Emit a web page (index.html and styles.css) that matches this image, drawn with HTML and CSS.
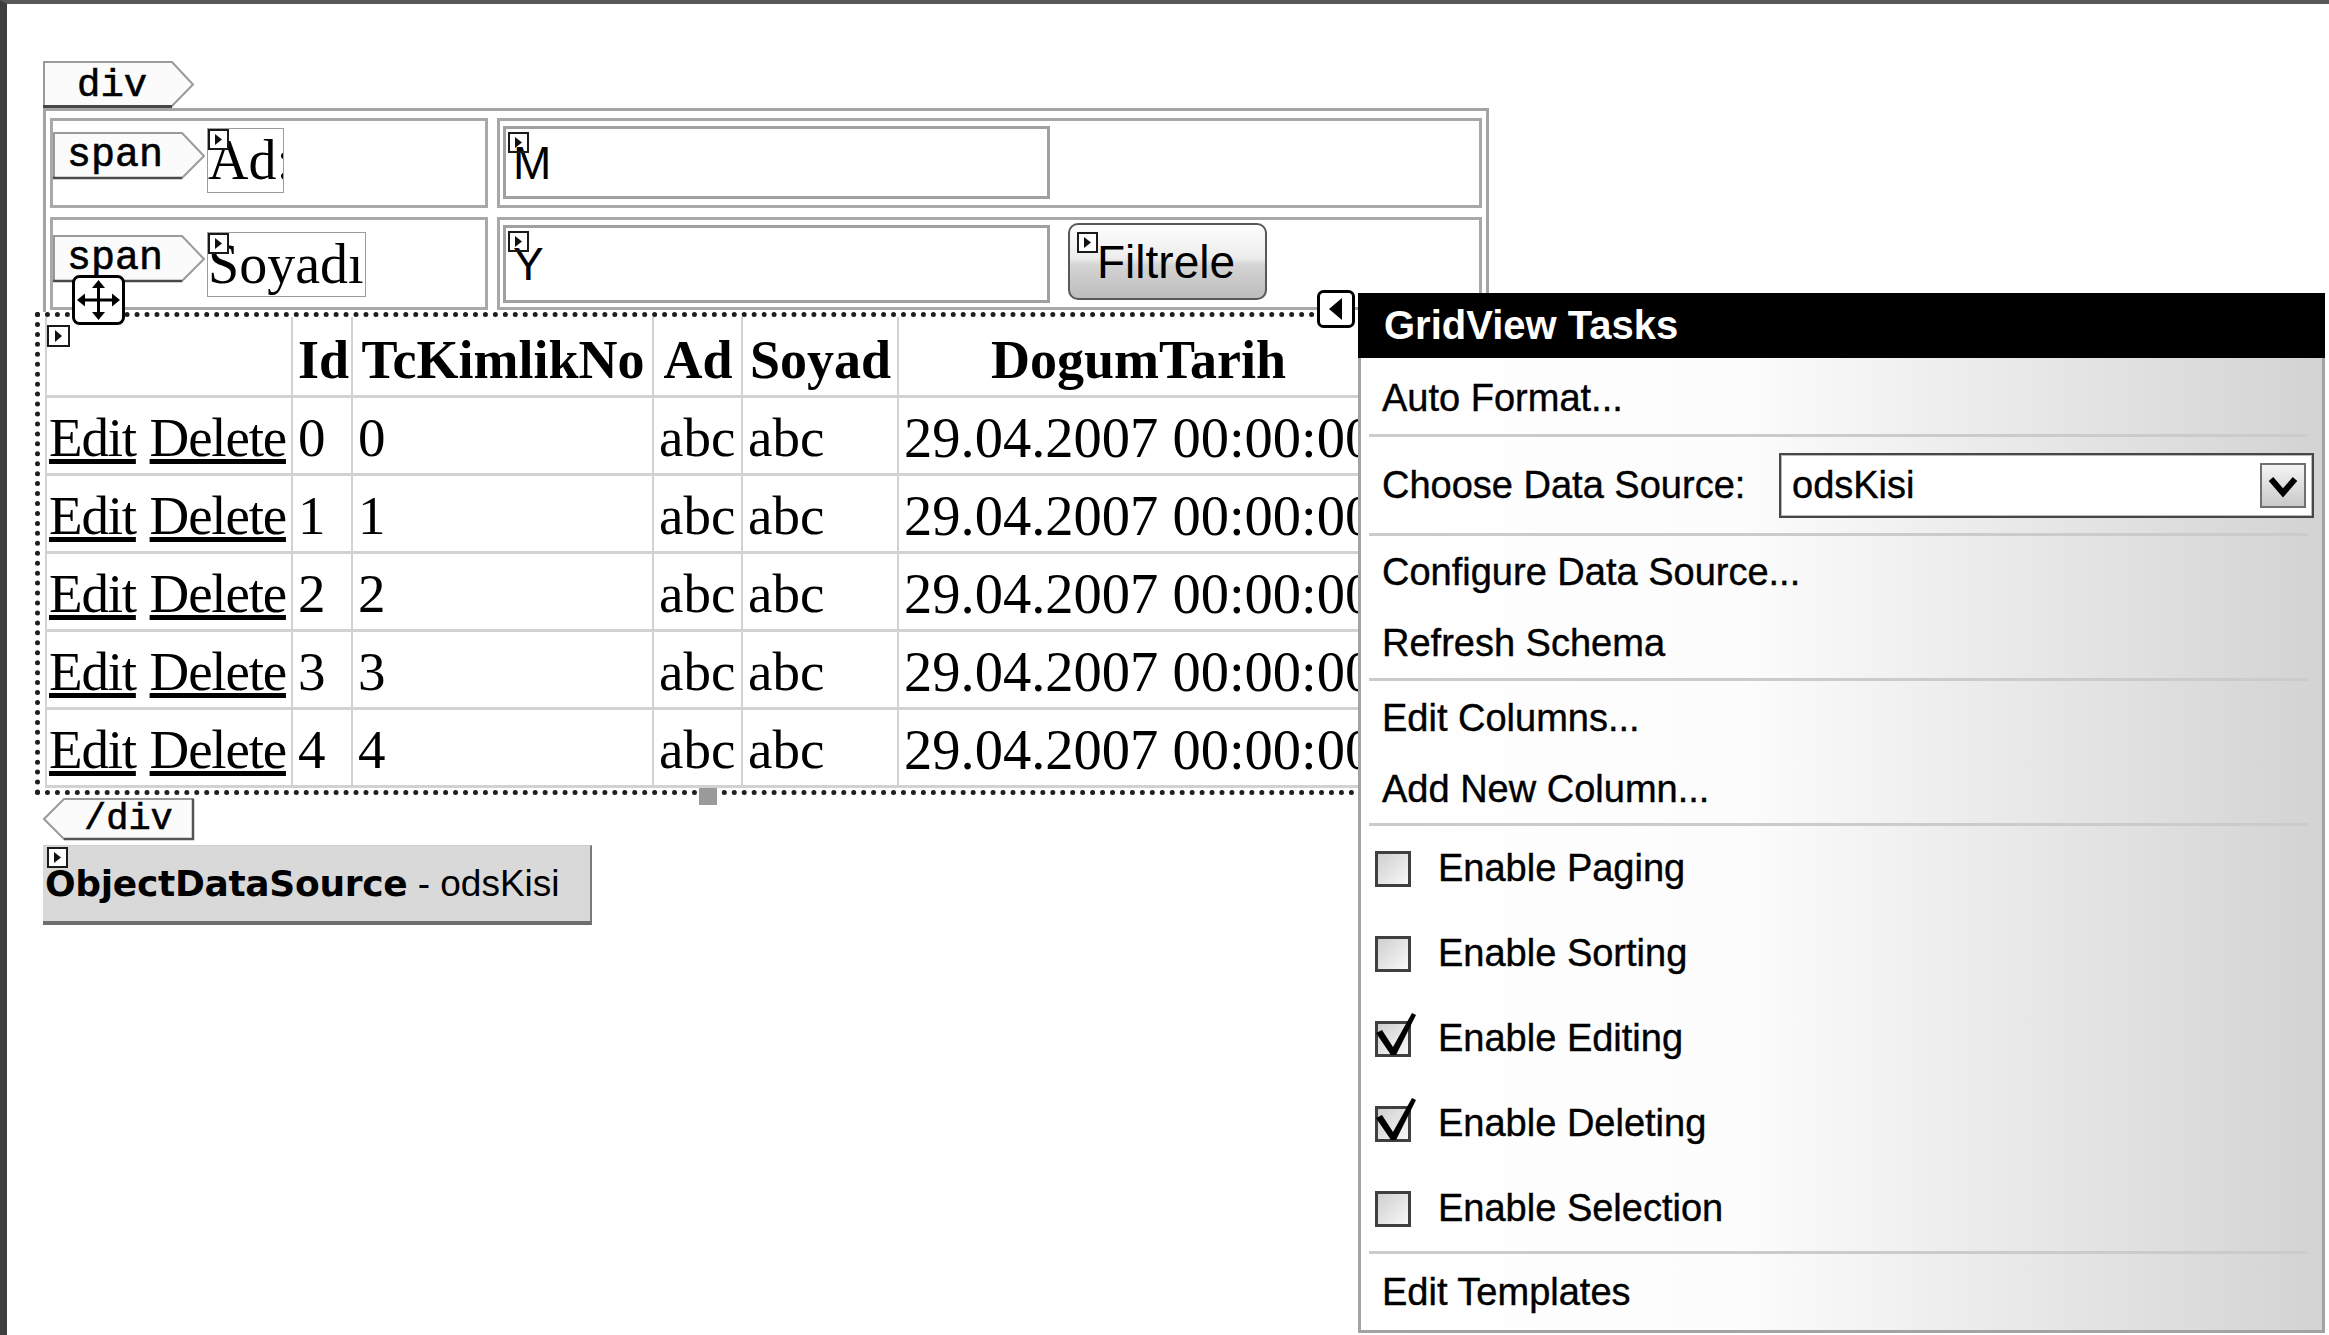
FILE: index.html
```html
<!DOCTYPE html>
<html>
<head>
<meta charset="utf-8">
<title>GridView Tasks</title>
<link rel="stylesheet" href="styles.css">
</head>
<body>
<div class="frame">

  <div class="tag tag-open">
    <svg class="tag-shape" width="152" height="47" viewBox="0 0 152 47"><polygon points="1,1 129,1 150,23.5 129,45 1,45" fill="#fbfbfb" stroke="#9a9a9a" stroke-width="2"/><line x1="0" y1="45.5" x2="129" y2="45.5" stroke="#474747" stroke-width="3"/></svg>
    <span class="tag-text tag-text-open">div</span>
  </div>

  <div class="divbox">
    <div class="cell r1">
      <div class="tag tag-span">
        <svg class="tag-shape" width="153" height="48" viewBox="0 0 153 48"><polygon points="1,1 129,1 151,24 129,46 1,46" fill="#fbfbfb" stroke="#9a9a9a" stroke-width="2"/><line x1="0" y1="46" x2="129" y2="46" stroke="#4a4a4a" stroke-width="2.5"/></svg>
        <span class="tag-text tag-text-span">span</span>
      </div>
      <div class="label label-ad">
        <svg class="glyph" width="21" height="21" viewBox="0 0 21 21"><rect x="1" y="1" width="19" height="19" fill="#fff" stroke="#1a1a1a" stroke-width="2"/><polygon points="7,5 14,10.5 7,16" fill="#111"/></svg>Ad:
      </div>
    </div>
    <div class="cell r1">
      <div class="input input-1">
        <svg class="glyph" width="21" height="21" viewBox="0 0 21 21"><rect x="1" y="1" width="19" height="19" fill="#fff" fill-opacity="0" stroke="#1a1a1a" stroke-width="2"/><polygon points="7,5 14,10.5 7,16" fill="#111"/></svg>M
      </div>
    </div>
    <div class="cell r2">
      <div class="tag tag-span">
        <svg class="tag-shape" width="153" height="48" viewBox="0 0 153 48"><polygon points="1,1 129,1 151,24 129,46 1,46" fill="#fbfbfb" stroke="#9a9a9a" stroke-width="2"/><line x1="0" y1="46" x2="129" y2="46" stroke="#4a4a4a" stroke-width="2.5"/></svg>
        <span class="tag-text tag-text-span">span</span>
      </div>
      <div class="label label-soy">
        <svg class="glyph" width="21" height="21" viewBox="0 0 21 21"><rect x="1" y="1" width="19" height="19" fill="#fff" stroke="#1a1a1a" stroke-width="2"/><polygon points="7,5 14,10.5 7,16" fill="#111"/></svg>Soyadı:
      </div>
    </div>
    <div class="cell r2">
      <div class="input input-2">
        <svg class="glyph" width="21" height="21" viewBox="0 0 21 21"><rect x="1" y="1" width="19" height="19" fill="#fff" fill-opacity="0" stroke="#1a1a1a" stroke-width="2"/><polygon points="7,5 14,10.5 7,16" fill="#111"/></svg>Y
      </div>
      <div class="btn">
        <svg class="glyph glyph-btn" width="21" height="21" viewBox="0 0 21 21"><rect x="1" y="1" width="19" height="19" fill="#fff" stroke="#1a1a1a" stroke-width="2"/><polygon points="7,5 14,10.5 7,16" fill="#111"/></svg>Filtrele
      </div>
    </div>
  </div>

  <div class="gridview">
    <svg class="move-handle" width="53" height="50" viewBox="0 0 53 50">
      <rect x="1.5" y="1.5" width="50" height="47" rx="6" fill="#fff" stroke="#000" stroke-width="3"/>
      <line x1="26.5" y1="10" x2="26.5" y2="40" stroke="#000" stroke-width="3"/>
      <line x1="10" y1="25" x2="43" y2="25" stroke="#000" stroke-width="3"/>
      <polygon points="26.5,5 20,13 33,13" fill="#000"/>
      <polygon points="26.5,45 20,37 33,37" fill="#000"/>
      <polygon points="5,25 13,18.5 13,31.5" fill="#000"/>
      <polygon points="48,25 40,18.5 40,31.5" fill="#000"/>
    </svg>
    <svg class="grid-glyph" width="23" height="22" viewBox="0 0 23 22"><rect x="1" y="1" width="21" height="20" fill="#fff" stroke="#1a1a1a" stroke-width="2"/><polygon points="8,5 15,11 8,17" fill="#111"/></svg>
    <svg class="smart-tag" width="38" height="38" viewBox="0 0 38 38"><rect x="1.5" y="1.5" width="35" height="35" rx="5" fill="#fff" stroke="#000" stroke-width="3"/><polygon points="25,8 12,19 25,30" fill="#000"/></svg>
    <div class="resize-handle"></div>

    <table class="grid">
      <colgroup>
        <col class="c-cmd"><col class="c-id"><col class="c-tc"><col class="c-ad"><col class="c-soy"><col class="c-dt">
      </colgroup>
      <thead>
        <tr><th class="first"></th><th>Id</th><th>TcKimlikNo</th><th>Ad</th><th>Soyad</th><th>DogumTarih</th></tr>
      </thead>
      <tbody>
        <tr><td class="first"><a class="lnk" href="#">Edit</a> <a class="lnk" href="#">Delete</a></td><td>0</td><td>0</td><td>abc</td><td>abc</td><td class="date">29.04.2007 00:00:00</td></tr>
        <tr><td class="first"><a class="lnk" href="#">Edit</a> <a class="lnk" href="#">Delete</a></td><td>1</td><td>1</td><td>abc</td><td>abc</td><td class="date">29.04.2007 00:00:00</td></tr>
        <tr><td class="first"><a class="lnk" href="#">Edit</a> <a class="lnk" href="#">Delete</a></td><td>2</td><td>2</td><td>abc</td><td>abc</td><td class="date">29.04.2007 00:00:00</td></tr>
        <tr><td class="first"><a class="lnk" href="#">Edit</a> <a class="lnk" href="#">Delete</a></td><td>3</td><td>3</td><td>abc</td><td>abc</td><td class="date">29.04.2007 00:00:00</td></tr>
        <tr><td class="first"><a class="lnk" href="#">Edit</a> <a class="lnk" href="#">Delete</a></td><td>4</td><td>4</td><td>abc</td><td>abc</td><td class="date">29.04.2007 00:00:00</td></tr>
      </tbody>
    </table>
  </div>

  <div class="tag tag-close">
    <svg class="tag-shape" width="152" height="43" viewBox="0 0 152 43"><polygon points="21,1 150,1 150,41 21,41 1,21" fill="#fbfbfb" stroke="#9a9a9a" stroke-width="2"/><polyline points="150,1 150,41 21,41" fill="none" stroke="#555" stroke-width="2.5"/></svg>
    <span class="tag-text tag-text-close">/div</span>
  </div>

  <div class="ods">
    <svg class="glyph glyph-ods" width="21" height="21" viewBox="0 0 21 21"><rect x="1" y="1" width="19" height="19" fill="#fff" stroke="#1a1a1a" stroke-width="2"/><polygon points="7,5 14,10.5 7,16" fill="#111"/></svg>
    <span class="ods-type">ObjectDataSource</span><span class="ods-name">&nbsp;- odsKisi</span>
  </div>

  <div class="panel">
    <div class="panel-title">GridView Tasks</div>
    <div class="item it-auto">Auto Format...</div>
    <div class="sep"></div>
    <div class="item it-choose">
      <span>Choose Data Source:</span>
      <div class="select">
        <span class="select-text">odsKisi</span>
        <span class="select-btn"><svg width="42" height="41" viewBox="0 0 42 41"><polyline points="9,14 21,28 33,14" fill="none" stroke="#000" stroke-width="6"/></svg></span>
      </div>
    </div>
    <div class="sep"></div>
    <div class="item it-config">Configure Data Source...</div>
    <div class="item it-refresh">Refresh Schema</div>
    <div class="sep"></div>
    <div class="item it-cols">Edit Columns...</div>
    <div class="item it-add">Add New Column...</div>
    <div class="sep"></div>
    <div class="check-item"><span class="box"></span>Enable Paging</div>
    <div class="check-item"><span class="box"></span>Enable Sorting</div>
    <div class="check-item"><span class="box"><svg class="check" width="44" height="48" viewBox="0 0 44 48"><polygon points="1,20 7,17 18,34 37,0 41,2 21,42 16,42" fill="#000"/></svg></span>Enable Editing</div>
    <div class="check-item"><span class="box"><svg class="check" width="44" height="48" viewBox="0 0 44 48"><polygon points="1,20 7,17 18,34 37,0 41,2 21,42 16,42" fill="#000"/></svg></span>Enable Deleting</div>
    <div class="check-item"><span class="box"></span>Enable Selection</div>
    <div class="sep"></div>
    <div class="item it-tpl">Edit Templates</div>
  </div>

</div>
</body>
</html>
```

FILE: styles.css
```css
html, body {
  margin: 0;
  padding: 0;
}

body {
  width: 2329px;
  height: 1335px;
  overflow: hidden;
  background: #ffffff;
  color: #000;
  font-family: "Liberation Serif", "Times New Roman", serif;
}

.frame {
  position: relative;
  box-sizing: border-box;
  height: 1335px;
  border-top: 4px solid #585858;
  border-left: 7px solid #3e3e3e;
  padding: 57px 0 0 28px;
}

/* ---------- design-view tags (div / span / /div) ---------- */
.tag {
  display: grid;
  flex: none;
}

.tag > * {
  grid-area: 1 / 1;
}

.tag-text {
  align-self: center;
  justify-self: start;
  font-family: "Liberation Mono", "Courier New", monospace;
  font-size: 39px;
  line-height: 1;
  color: #000;
  -webkit-text-stroke: 0.6px #000;
}

.tag-open {
  width: 152px;
  height: 47px;
  margin-left: 8px;
}

.tag-text-open {
  padding-left: 34px;
  padding-top: 4px;
}

.tag-span {
  width: 153px;
  height: 48px;
}

.tag-text-span {
  padding-left: 14px;
  font-size: 40px;
}

.tag-close {
  width: 152px;
  height: 43px;
  margin: 3px 0 0 8px;
}

.tag-text-close {
  padding-left: 41px;
  font-size: 37px;
}

/* ---------- top form (div with table) ---------- */
.divbox {
  margin-left: 8px;
  width: 1446px;
  box-sizing: border-box;
  border: 3px solid #a4a4a4;
  border-bottom: 0;
  padding: 7px 4px 2px 4px;
  display: grid;
  grid-template-columns: 438px 985px;
  grid-template-rows: 90px 93px;
  gap: 9px;
}

.cell {
  box-sizing: border-box;
  border: 3px solid #a8a8a8;
  display: flex;
  align-items: flex-start;
}

.r1 .tag-span { margin-top: 11px; }
.r1 .label { margin-top: 7px; }
.r2 .tag-span { margin-top: 15px; }
.r2 .label { margin-top: 12px; }

.label {
  position: relative;
  box-sizing: border-box;
  height: 65px;
  margin-left: 1px;
  border: 1px solid #9c9c9c;
  overflow: hidden;
  white-space: nowrap;
  font-size: 56px;
  line-height: 63px;
  flex: none;
}

.label-ad { width: 77px; }
.label-soy { width: 159px; }

.glyph {
  position: absolute;
  left: 0;
  top: 0;
}

.input {
  position: relative;
  box-sizing: border-box;
  width: 547px;
  margin: 5px 0 0 3px;
  padding-left: 7px;
  border: 3px solid #a0a0a0;
  display: flex;
  align-items: center;
  font-family: "Liberation Sans", Arial, sans-serif;
  font-size: 46px;
  flex: none;
}

.input .glyph {
  left: 2px;
  top: 3px;
}

.input-1 { height: 73px; }
.input-2 { height: 78px; }

.btn {
  position: relative;
  box-sizing: border-box;
  width: 199px;
  height: 77px;
  margin: 3px 0 0 18px;
  padding-left: 27px;
  border: 2px solid #585858;
  border-radius: 10px;
  background: linear-gradient(#fdfdfd 0%, #ededed 45%, #d4d4d4 55%, #bdbdbd 100%);
  display: flex;
  align-items: center;
  font-family: "Liberation Sans", Arial, sans-serif;
  font-size: 46px;
  flex: none;
}

.btn .glyph-btn {
  left: 7px;
  top: 7px;
}

/* ---------- GridView ---------- */
.gridview {
  position: relative;
  width: 1380px;
  box-sizing: border-box;
  border: 5px dotted #1e1e1e;
  padding: 0 0 2px 5px;
}

.move-handle {
  position: absolute;
  left: 32px;
  top: -42px;
  z-index: 3;
}

.grid-glyph {
  position: absolute;
  left: 7px;
  top: 8px;
  z-index: 2;
}

.smart-tag {
  position: absolute;
  left: 1277px;
  top: -27px;
  z-index: 3;
}

.resize-handle {
  position: absolute;
  left: 659px;
  top: 471px;
  width: 18px;
  height: 17px;
  background: #9a9a9a;
  z-index: 2;
}

.grid {
  border-collapse: separate;
  border-spacing: 0;
  table-layout: fixed;
  width: 1334px;
  font-family: "Liberation Serif", "Times New Roman", serif;
  font-size: 55px;
  line-height: 1.1;
}

.c-cmd { width: 248px; }
.c-id { width: 60px; }
.c-tc { width: 301px; }
.c-ad { width: 89px; }
.c-soy { width: 156px; }
.c-dt { width: 480px; }

.grid th,
.grid td {
  box-sizing: border-box;
  border-right: 2px solid #d2d2d2;
  border-bottom: 3px solid #d2d2d2;
  padding: 0 4px 0 5px;
  white-space: nowrap;
  vertical-align: middle;
}

.grid th {
  height: 81px;
  padding-top: 10px;
  font-size: 54px;
  font-weight: bold;
  text-align: center;
}

.grid td {
  height: 78px;
  padding-top: 6px;
  text-align: left;
}

.grid .date {
  font-size: 56.5px;
}

.grid .first {
  border-left: 2px solid #d2d2d2;
  padding-left: 2px;
}

.lnk {
  color: #000;
  text-decoration: underline;
  letter-spacing: -1.2px;
}

/* ---------- ObjectDataSource ---------- */
.ods {
  position: relative;
  box-sizing: border-box;
  width: 549px;
  height: 80px;
  margin: 4px 0 0 8px;
  padding-left: 2px;
  background: #d9d9d9;
  border-top: 1px solid #cfcfcf;
  border-right: 2px solid #7a7a7a;
  border-bottom: 4px solid #6e6e6e;
  display: flex;
  align-items: center;
  white-space: nowrap;
}

.ods .glyph-ods {
  left: 4px;
  top: 1px;
}

.ods-type {
  font-family: "DejaVu Sans", Verdana, sans-serif;
  font-weight: bold;
  font-size: 36px;
  letter-spacing: -0.3px;
}

.ods-name {
  font-family: "Liberation Sans", Arial, sans-serif;
  font-size: 37px;
}

/* ---------- GridView Tasks panel ---------- */
.panel {
  position: absolute;
  left: 1351px;
  top: 289px;
  width: 967px;
  height: 1040px;
  box-sizing: border-box;
  border: 3px solid #a3a3a3;
  border-top: 0;
  background: linear-gradient(90deg, #ffffff 0%, #fcfcfc 40%, #d3d3d3 100%);
  font-family: "Liberation Sans", Arial, sans-serif;
  font-size: 38px;
  color: #000;
  -webkit-text-stroke: 0.4px #000;
  z-index: 5;
}

.panel-title {
  height: 65px;
  margin: 0 -3px;
  padding-left: 26px;
  background: #000;
  color: #fff;
  -webkit-text-stroke: 0;
  font-weight: bold;
  font-size: 40px;
  display: flex;
  align-items: center;
}

.item {
  display: flex;
  align-items: center;
  padding-left: 21px;
  white-space: nowrap;
}

.it-auto { height: 72px; margin-top: 4px; }
.it-choose { height: 96px; padding-right: 8px; }
.it-config { height: 72px; }
.it-refresh { height: 70px; }
.it-cols { height: 74px; }
.it-add { height: 68px; }
.it-tpl { height: 76px; }

.sep {
  height: 3px;
  margin: 0 14px 0 8px;
  background: #cbcbcb;
}

.select {
  box-sizing: border-box;
  width: 535px;
  height: 65px;
  margin-left: auto;
  padding: 0 6px 0 11px;
  border: 2px solid #474747;
  box-shadow: inset 0 0 0 1px #b8b8b8;
  background: #fff;
  display: flex;
  align-items: center;
}

.select-text {
  flex: 1;
}

.select-btn {
  box-sizing: border-box;
  width: 46px;
  height: 45px;
  border: 2px solid #707070;
  background: linear-gradient(#f4f4f4, #c9c9c9);
  display: flex;
  align-items: center;
  justify-content: center;
}

.check-item {
  height: 85px;
  padding-left: 14px;
  display: flex;
  align-items: center;
  white-space: nowrap;
}

.box {
  position: relative;
  box-sizing: border-box;
  width: 36px;
  height: 36px;
  margin-right: 27px;
  border: 3px solid #3f3f3f;
  background: linear-gradient(135deg, #cfcfcf, #f8f8f8);
  flex: none;
}

.check {
  position: absolute;
  left: -3px;
  top: -11px;
  overflow: visible;
}
```
